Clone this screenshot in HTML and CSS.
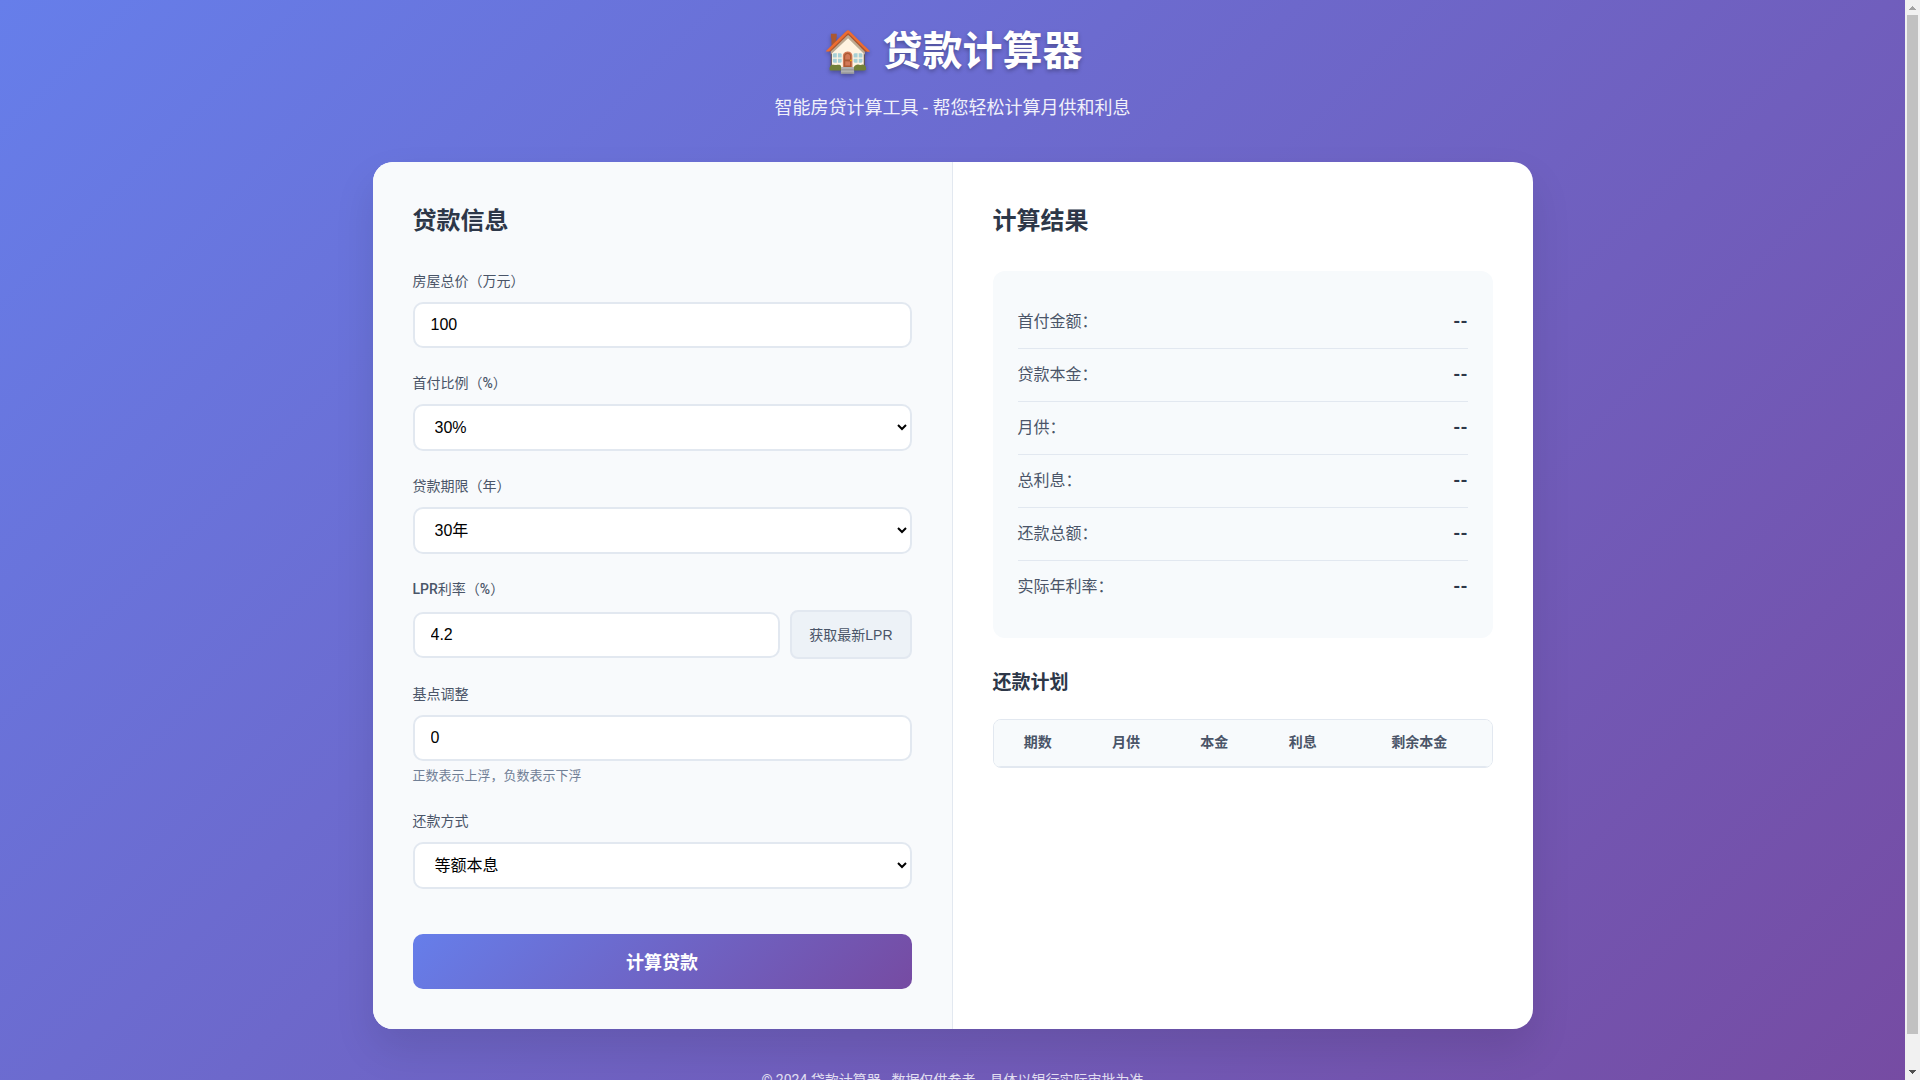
FILE: index.html
```html
<!DOCTYPE html>
<html lang="zh-CN">
<head>
  <meta charset="UTF-8">
  <meta name="viewport" content="width=device-width, initial-scale=1.0">
  <title>贷款计算器</title>
  <link rel="stylesheet" href="styles.css">
</head>
<body>
  <div class="page">
    <div class="container">
      <header class="header">
        <h1 class="header-title">🏠 贷款计算器</h1>
        <p class="header-subtitle">智能房贷计算工具 - 帮您轻松计算月供和利息</p>
      </header>

      <main class="calculator">
        <form class="form-panel">
          <h2 class="panel-title">贷款信息</h2>

          <div class="form-group">
            <label class="form-label" for="housePrice">房屋总价（万元）</label>
            <input class="form-control" type="number" id="housePrice" value="100">
          </div>

          <div class="form-group">
            <label class="form-label" for="downPayment">首付比例（<span class="latin">%</span>）</label>
            <select class="form-control form-select" id="downPayment">
              <option>20%</option>
              <option selected>30%</option>
              <option>40%</option>
              <option>50%</option>
            </select>
          </div>

          <div class="form-group">
            <label class="form-label" for="loanTerm">贷款期限（年）</label>
            <select class="form-control form-select" id="loanTerm">
              <option>10年</option>
              <option>20年</option>
              <option selected>30年</option>
            </select>
          </div>

          <div class="form-group">
            <label class="form-label" for="lprRate"><span class="latin">LPR</span>利率（<span class="latin">%</span>）</label>
            <div class="input-row">
              <input class="form-control" type="number" id="lprRate" value="4.2" step="0.01">
              <button class="btn-secondary" type="button">获取最新LPR</button>
            </div>
          </div>

          <div class="form-group">
            <label class="form-label" for="basisPoints">基点调整</label>
            <input class="form-control" type="number" id="basisPoints" value="0">
            <small class="form-hint">正数表示上浮，负数表示下浮</small>
          </div>

          <div class="form-group">
            <label class="form-label" for="repayment">还款方式</label>
            <select class="form-control form-select" id="repayment">
              <option selected>等额本息</option>
              <option>等额本金</option>
            </select>
          </div>

          <button class="btn-primary" type="button">计算贷款</button>
        </form>

        <section class="result-panel">
          <h2 class="panel-title">计算结果</h2>

          <dl class="result-card">
            <div class="result-item"><dt>首付金额：</dt><dd class="result-value">--</dd></div>
            <div class="result-item"><dt>贷款本金：</dt><dd class="result-value">--</dd></div>
            <div class="result-item"><dt>月供：</dt><dd class="result-value">--</dd></div>
            <div class="result-item"><dt>总利息：</dt><dd class="result-value">--</dd></div>
            <div class="result-item"><dt>还款总额：</dt><dd class="result-value">--</dd></div>
            <div class="result-item"><dt>实际年利率：</dt><dd class="result-value">--</dd></div>
          </dl>

          <h3 class="schedule-title">还款计划</h3>
          <div class="table-wrap">
            <table class="schedule">
              <thead>
                <tr>
                  <th scope="col">期数</th>
                  <th scope="col">月供</th>
                  <th scope="col">本金</th>
                  <th scope="col">利息</th>
                  <th scope="col">剩余本金</th>
                </tr>
              </thead>
              <tbody></tbody>
            </table>
          </div>
        </section>
      </main>

      <footer class="footer">© 2024 贷款计算器 - 数据仅供参考，具体以银行实际审批为准</footer>
    </div>
  </div>

  <div class="scrollbar" aria-hidden="true">
    <svg class="scrollbar-arrow scrollbar-arrow-off" viewBox="0 0 15 15" shape-rendering="crispEdges"><path d="M7 6h1v1h1v1h1v1h1v1H4V9h1V8h1V7h1z"/></svg>
    <div class="scrollbar-track"><div class="scrollbar-thumb"></div></div>
    <svg class="scrollbar-arrow" viewBox="0 0 15 15" shape-rendering="crispEdges"><path d="M4 5h7v1h-1v1H9v1H8v1H7V8H6V7H5V6H4z"/></svg>
  </div>
</body>
</html>
```
FILE: styles.css
```css
* {
  margin: 0;
  padding: 0;
  box-sizing: border-box;
}

html {
  scrollbar-width: none;
}

body {
  display: flex;
  align-items: stretch;
  min-height: 100vh;
  font-family: Roboto, "Noto Sans CJK SC", sans-serif;
  font-size: 16px;
  line-height: 1.6;
  color: #333;
}

.page {
  flex: 1;
  min-width: 0;
  background: linear-gradient(135deg, #667eea 0%, #764ba2 100%);
}

.scrollbar {
  position: sticky;
  top: 0;
  display: flex;
  flex-direction: column;
  width: 15px;
  height: 100vh;
  background: #f1f1f1;
}

.scrollbar-arrow {
  display: block;
  width: 15px;
  height: 15px;
  fill: #505050;
}

.scrollbar-arrow-off {
  fill: #a3a3a3;
}

.scrollbar-track {
  flex: 1;
  padding: 0 2px;
}

.scrollbar-thumb {
  height: 97%;
  background: #c1c1c1;
}

.container {
  max-width: 1200px;
  margin: 0 auto;
  padding: 20px;
}

.header {
  margin-bottom: 40px;
  text-align: center;
  color: #fff;
}

.header-title {
  margin-bottom: 10px;
  font-size: 40px;
  line-height: 64px;
  font-weight: 700;
  text-shadow: 0 2px 4px rgba(0, 0, 0, 0.3);
}

.header-subtitle {
  font-size: 18px;
  line-height: 28px;
  opacity: 0.9;
}

.calculator {
  display: grid;
  grid-template-columns: 1fr 1fr;
  overflow: hidden;
  background: #fff;
  border-radius: 20px;
  box-shadow: 0 20px 40px rgba(0, 0, 0, 0.1);
}

.form-panel {
  padding: 40px;
  background: #f8fafc;
  border-right: 1px solid #e2e8f0;
}

.result-panel {
  padding: 40px;
}

.panel-title {
  margin-bottom: 30px;
  font-size: 24px;
  line-height: 39px;
  font-weight: 600;
  color: #2d3748;
}

.form-group {
  margin-bottom: 25px;
}

.form-label {
  display: block;
  margin-bottom: 10px;
  font-size: 14px;
  line-height: 21px;
  color: #4a5568;
}

.latin {
  font-weight: 500;
}

.form-control {
  display: block;
  width: 100%;
  height: 46px;
  padding: 12px 16px;
  font-family: "Liberation Sans", "Noto Sans CJK SC", sans-serif;
  font-size: 16px;
  color: #000;
  background: #fff;
  border: 2px solid #e2e8f0;
  border-radius: 10px;
}

.form-select {
  height: 47px;
}

.form-control:focus {
  outline: none;
  border-color: #667eea;
}

.input-row {
  display: flex;
  align-items: center;
  gap: 10px;
}

.input-row .form-control {
  flex: 1;
  min-width: 0;
}

.btn-secondary {
  padding: 13px 17px 11px;
  font-family: "Liberation Sans", "Noto Sans CJK SC", sans-serif;
  font-size: 14px;
  line-height: 21px;
  white-space: nowrap;
  color: #4a5568;
  background: #edf2f7;
  border: 2px solid #e2e8f0;
  border-radius: 8px;
  cursor: pointer;
}

.form-hint {
  display: block;
  margin-top: 4px;
  font-size: 13px;
  line-height: 21px;
  color: #718096;
}

.btn-primary {
  width: 100%;
  margin-top: 20px;
  padding: 17px 15px 13px;
  font-family: "Liberation Sans", "Noto Sans CJK SC", sans-serif;
  font-size: 18px;
  line-height: 25px;
  font-weight: 600;
  color: #fff;
  background: linear-gradient(135deg, #667eea 0%, #764ba2 100%);
  border: none;
  border-radius: 10px;
  cursor: pointer;
}

.result-card {
  margin-bottom: 30px;
  padding: 25px;
  background: #f7fafc;
  border-radius: 12px;
}

.result-item {
  display: flex;
  justify-content: space-between;
  align-items: center;
  padding: 12px 0;
  line-height: 28px;
  color: #4a5568;
  border-bottom: 1px solid #e2e8f0;
}

.result-item:last-child {
  border-bottom: none;
}

.result-value {
  font-size: 18px;
  font-weight: 700;
  color: #2d3748;
}

.schedule-title {
  margin-bottom: 22px;
  font-size: 19px;
  line-height: 29px;
  font-weight: 600;
  color: #2d3748;
}

.table-wrap {
  overflow: hidden;
  border: 1px solid #e2e8f0;
  border-radius: 8px;
}

.schedule {
  width: 100%;
  border-collapse: collapse;
  font-size: 14px;
  line-height: 22px;
}

.schedule th {
  padding: 11px 8px 13px;
  text-align: center;
  font-weight: 600;
  color: #4a5568;
  background: #f7fafc;
  border-bottom: 1px solid #e2e8f0;
}

.footer {
  margin-top: 40px;
  text-align: center;
  font-size: 14px;
  line-height: 23px;
  color: #fff;
  opacity: 0.8;
}
```
